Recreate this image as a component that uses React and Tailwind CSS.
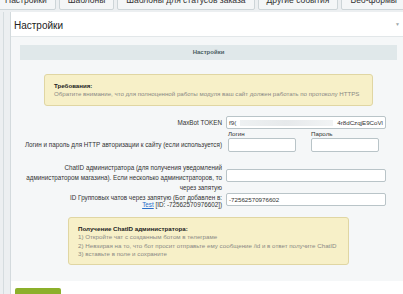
import React from "react";

const tabs = ["Настройки", "Шаблоны", "Шаблоны для статусов заказа", "Другие события", "Веб-формы", "Кнопки"];

const inputCls = "bg-white border border-[#b9c4c8] rounded-[2px]";
const labelCls = "w-[215px] shrink-0 pr-[4px] text-right text-[6.3px] text-[#333] whitespace-nowrap";

export default function App() {
    return (
        <div className="w-[403px] h-[294px] overflow-hidden bg-[#eceff1]" style={{ fontFamily: '"Liberation Sans", Arial, sans-serif' }}>
            {/* tabs */}
            <div className="flex h-[12px] -ml-[4px] gap-[3px] items-start">
                {tabs.map((t) => (
                    <div key={t} className="h-[20px] -mt-[10px] px-[8px] flex items-center text-[8.5px] text-[#333] bg-[#f4f6f7] border border-[#cdd5d8] rounded-b-[2px] whitespace-nowrap">{t}</div>
                ))}
            </div>

            <div className="ml-[3px] pl-[6px] border-l border-[#d5dcdf]">
                <div className="bg-white border-l border-[#d3dadd]">
                    <div className="flex items-center justify-between h-[24px] px-[2px]">
                        <span className="text-[10px] text-[#222] ml-[1px] mt-[2px]">Настройки</span>
                        <span className="text-[5px] text-[#a0a8ab] mr-[1px] mt-[2px]">▼</span>
                    </div>

                    <div className="bg-[#f5f7f8] border-t border-[#e2e7e9] pt-[8px] pb-[16px]">
                        <div className="ml-[9px] mr-[6px] h-[15px] bg-[#e0e8ea] flex items-center justify-center text-[6px] font-bold text-[#4b5d62]">Настройки</div>

                        <div className="mt-[14px] ml-[33px] mr-[30px] h-[32px] bg-[#f7f0c8] border border-[#e0d6a3] rounded-[3px] px-[9px] py-[6.5px] text-[6.15px] leading-[8.5px]">
                            <div className="font-bold text-[#222]">Требования:</div>
                            <div className="text-[#8a8a85]">Обратите внимание, что для полноценной работы модуля ваш сайт должен работать по протоколу HTTPS</div>
                        </div>

                        {/* MaxBot token */}
                        <div className="mt-[10px] flex items-center h-[13px]">
                            <div className={labelCls}>MaxBot TOKEN</div>
                            <div className={"w-[160px] h-[13px] flex items-center px-[2px] text-[6.2px] text-[#333] " + inputCls}>
                                <span>f9(</span>
                                <span className="flex-1 mx-[4px] h-[6px] bg-gradient-to-r from-[#eef1f2] via-[#e6e9eb] to-[#f2f4f5]"></span>
                                <span>4r8dCzqjE9CoVl</span>
                            </div>
                        </div>

                        {/* login / password */}
                        <div className="mt-[1px] flex items-end">
                            <div className={labelCls + " leading-[14px]"}>Логин и пароль для HTTP авторизации к сайту (если используется)</div>
                            <div className="flex gap-[15px] ml-[2px]">
                                <div>
                                    <div className="text-[6.2px] leading-[8px] text-[#333]">Логин</div>
                                    <div className={"w-[68px] h-[14px] " + inputCls}></div>
                                </div>
                                <div>
                                    <div className="text-[6.2px] leading-[8px] text-[#333]">Пароль</div>
                                    <div className={"w-[68px] h-[14px] " + inputCls}></div>
                                </div>
                            </div>
                        </div>

                        {/* chat id */}
                        <div className="mt-[11px] flex items-start">
                            <div className={labelCls + " leading-[10px]"}>
                                ChatID администратора (для получения уведомлений<br />администратором магазина). Если несколько администраторов, то<br />через запятую
                            </div>
                            <div className={"mt-[6px] w-[160px] h-[13px] " + inputCls}></div>
                        </div>

                        {/* group chats */}
                        <div className="flex items-start">
                            <div className={labelCls + " pt-[1px] leading-[7px]"}>
                                ID Групповых чатов через запятую (Бот добавлен в:<br /><span className="text-[#2a6fc9] underline">Test</span> [ID: -72562570976602])
                            </div>
                            <div className={"w-[160px] h-[13px] flex items-center px-[2px] text-[6.2px] text-[#333] " + inputCls}>-72562570976602</div>
                        </div>

                        <div className="mt-[9px] ml-[57px] mr-[54px] h-[48px] bg-[#f7f0c8] border border-[#e0d6a3] rounded-[3px] px-[9px] py-[7px] text-[6.2px] leading-[8.4px]">
                            <div className="font-bold text-[#222]">Получение ChatID администратора:</div>
                            <div className="text-[#8a8a85]">1) Откройте чат с созданным ботом в телеграме</div>
                            <div className="text-[#8a8a85]">2) Невзирая на то, что бот просит отправьте ему сообщение /id и в ответ получите ChatID</div>
                            <div className="text-[#8a8a85]">3) вставьте в поле и сохраните</div>
                        </div>
                    </div>

                    <div className="h-[20px] bg-white pt-[7px] pl-[4px]">
                        <div className="w-[46px] h-[14px] bg-[#8cb02b] rounded-[2px]"></div>
                    </div>
                </div>
            </div>
        </div>
    );
}
